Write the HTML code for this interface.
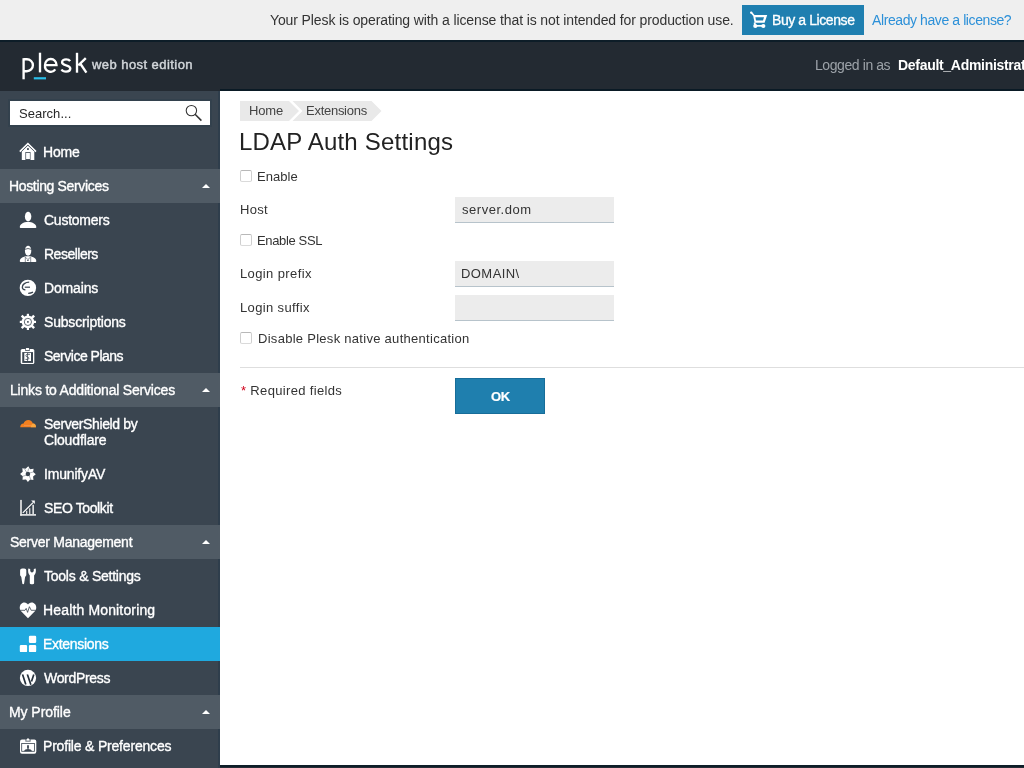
<!DOCTYPE html><html><head><meta charset="utf-8">
<style>
*{margin:0;padding:0;box-sizing:border-box}
html,body{width:1024px;height:768px;overflow:hidden;background:#fff}
body{position:relative;font-family:"Liberation Sans",sans-serif;color:#333}
.a{position:absolute;white-space:nowrap;line-height:normal;will-change:transform}
.it{-webkit-text-stroke:0.35px #fff}
#top{position:absolute;left:0;top:0;width:1024px;height:40px;background:#efefef}
#hdr{position:absolute;left:0;top:40px;width:1024px;height:51px;background:#232a32;border-top:2px solid #0d1d28}
#side{position:absolute;left:0;top:91px;width:220px;height:677px;background:#3a4550;border-right:2px solid #2f3e4c}
#main{position:absolute;left:220px;top:89px;width:804px;height:678px;background:#fff;border-top:2px solid #0a1a25;border-bottom:2px solid #0e1d28}
.sec{position:absolute;left:0;width:220px;height:34px;background:#505b65}
.tri{position:absolute;left:202px;width:0;height:0;border-left:4.2px solid transparent;border-right:4.2px solid transparent;border-bottom:4.8px solid #fff}
.it{color:#fff;font-size:14px}
.ic{position:absolute;left:16px;width:24px;height:24px}
.lb{font-size:13px;color:#333}
.cb{position:absolute;left:240px;width:12px;height:12px;border:1px solid #cfcfcf;border-top-color:#b8b8b8;border-bottom-color:#dadada;border-radius:2px;background:#fff}
.inp{position:absolute;left:455px;width:159px;height:26px;background:#ececec;border-bottom:1px solid #b7c3cb}
</style></head><body>
<div id="top"></div>
<div class="a" style="left: 269.9px; top: 12px; font-size: 14px; color: rgb(51, 51, 51); letter-spacing: -0.115px;">Your Plesk is operating with a license that is not intended for production use.</div>
<div style="position:absolute;left:742px;top:5px;width:122px;height:30px;background:#1f7fb0"></div>
<div class="a" style="left: 772px; top: 12px; font-size: 14px; color: rgb(255, 255, 255); -webkit-text-stroke: 0.3px rgb(255, 255, 255); letter-spacing: -0.416px;">Buy a License</div>
<div class="a" style="left: 871.9px; top: 12px; font-size: 14px; color: rgb(44, 144, 216); letter-spacing: -0.409px;">Already have a license?</div>

<div id="hdr"></div>
<div class="a" style="left: 92.18px; top: 57px; font-size: 13px; -webkit-text-stroke: 0.45px rgb(210, 214, 218); color: rgb(210, 214, 218); letter-spacing: 0.439px;">web host edition</div>
<div class="a" style="left: 814.64px; top: 57px; font-size: 14px; color: rgb(156, 162, 168); letter-spacing: -0.415px;">Logged in as</div>
<div class="a" style="left: 898.3px; top: 57px; font-size: 14px; font-weight: bold; color: rgb(255, 255, 255); letter-spacing: -0.3px;">Default_Administrator</div>

<div id="side"></div>
<div style="position:absolute;left:8px;top:99px;width:204px;height:28px;background:#33414d"></div>
<div style="position:absolute;left:10px;top:101px;width:200px;height:24px;background:#fff"></div>
<div class="a" style="left: 18.82px; top: 106px; font-size: 13px; color: rgb(40, 40, 40); letter-spacing: 0.031px;">Search...</div>


<div class="sec" style="top:169px"></div><div class="tri" style="top:183.5px"></div>
<div class="sec" style="top:373px"></div><div class="tri" style="top:387.5px"></div>
<div class="sec" style="top:525px"></div><div class="tri" style="top:539.5px"></div>
<div class="sec" style="top:695px"></div><div class="tri" style="top:709.5px"></div>
<div style="position:absolute;left:0;top:627px;width:220px;height:34px;background:#1fa9df"></div>
<div class="a it" style="left: 9.1px; top: 178px; letter-spacing: -0.344px;">Hosting Services</div>
<div class="a it" style="left: 9.82px; top: 382px; letter-spacing: -0.196px;">Links to Additional Services</div>
<div class="a it" style="left: 10px; top: 534px; letter-spacing: -0.27px;">Server Management</div>
<div class="a it" style="left: 9.28px; top: 704px; letter-spacing: -0.063px;">My Profile</div>
<div class="a it" style="left: 43.1px; top: 144px; letter-spacing: -0.201px;">Home</div>
<div class="a it" style="left: 43.64px; top: 212px; letter-spacing: -0.244px;">Customers</div>
<div class="a it" style="left: 43.64px; top: 246px; letter-spacing: -0.5px;">Resellers</div>
<div class="a it" style="left: 43.64px; top: 280px; letter-spacing: -0.166px;">Domains</div>
<div class="a it" style="left: 43.64px; top: 314px; letter-spacing: -0.181px;">Subscriptions</div>
<div class="a it" style="left: 43.64px; top: 348px; letter-spacing: -0.5px;">Service Plans</div>
<div class="a it" style="left: 43.64px; top: 416px; letter-spacing: -0.371px;">ServerShield by</div>
<div class="a it" style="left: 43.64px; top: 432px; letter-spacing: -0.132px;">Cloudflare</div>
<div class="a it" style="left: 43.64px; top: 466px; letter-spacing: -0.175px;">ImunifyAV</div>
<div class="a it" style="left: 43.64px; top: 500px; letter-spacing: -0.38px;">SEO Toolkit</div>
<div class="a it" style="left: 43.64px; top: 568px; letter-spacing: -0.239px;">Tools &amp; Settings</div>
<div class="a it" style="left: 42.74px; top: 602px; letter-spacing: 0.15px;">Health Monitoring</div>
<div class="a it" style="left: 43.46px; top: 636px; letter-spacing: -0.291px;">Extensions</div>
<div class="a it" style="left: 43.64px; top: 670px; letter-spacing: -0.325px;">WordPress</div>
<div class="a it" style="left: 43.46px; top: 738px; letter-spacing: -0.19px;">Profile &amp; Preferences</div>
<div id="main"></div><div style="position:absolute;left:220px;top:767px;width:804px;height:1px;background:#262c35"></div>
<svg style="position:absolute;left:0;top:0" width="1024" height="768">
<polygon points="240,101 289,101 299,111 289,121 240,121" fill="#e9e9e9"></polygon>
<polygon points="292.5,101 371.5,101 381.5,111 371.5,121 292.5,121 302.5,111" fill="#e9e9e9"></polygon>
<rect x="240" y="367" width="784" height="1" fill="#dedede"></rect>
</svg>
<div class="a" style="left: 249.28px; top: 103px; font-size: 13px; color: rgb(68, 68, 68); letter-spacing: -0.136px;">Home</div>
<div class="a" style="left: 306.46px; top: 103px; font-size: 13px; color: rgb(68, 68, 68); letter-spacing: -0.27px;">Extensions</div>
<div class="a" style="left: 239.46px; top: 128px; font-size: 24px; color: rgb(34, 34, 34); letter-spacing: 0.215px;">LDAP Auth Settings</div>
<div class="cb" style="top:170px"></div>
<div class="a lb" style="left: 257.46px; top: 169px; letter-spacing: 0.04px;">Enable</div>
<div class="a lb" style="left: 239.64px; top: 202px; letter-spacing: 0.269px;">Host</div>
<div class="inp" style="top:197px"></div>
<div class="a lb" style="left: 461.72px; top: 202px; letter-spacing: 0.53px;">server.dom</div>
<div class="cb" style="top:234px"></div>
<div class="a lb" style="left: 257.46px; top: 233px; letter-spacing: -0.355px;">Enable SSL</div>
<div class="a lb" style="left: 239.64px; top: 266px; letter-spacing: 0.381px;">Login prefix</div>
<div class="inp" style="top:261px"></div>
<div class="a lb" style="left: 460.82px; top: 266px; letter-spacing: 0.432px;">DOMAIN\</div>
<div class="a lb" style="left: 239.64px; top: 300px; letter-spacing: 0.364px;">Login suffix</div>
<div class="inp" style="top:295px"></div>
<div class="cb" style="top:332px"></div>
<div class="a lb" style="left: 258px; top: 331px; letter-spacing: 0.283px;">Disable Plesk native authentication</div>
<div class="a lb" style="left: 240.54px; top: 383px; letter-spacing: 0.333px;"><span style="color:#d0021b">*</span> Required fields</div>
<div style="position:absolute;left:455px;top:378px;width:90px;height:36px;background:#1f7fae;border:1px solid #176d99"></div>
<div class="a" style="left: 490.9px; top: 389px; font-size: 13px; font-weight: bold; color: rgb(255, 255, 255); -webkit-text-stroke: 0.2px rgb(255, 255, 255); letter-spacing: -0.4px;">OK</div>


<svg id="ov" style="position:absolute;left:0;top:0;pointer-events:none" width="1024" height="768" viewBox="0 0 1024 768">
<!-- logo -->
<g fill="none" stroke="#fff" stroke-width="2.35">
<path d="M23.6 79.3V58.2"></path>
<path d="M23.6 59.2H26.9A6 6 0 0 1 26.9 71.2H23.6"></path>
<path d="M40 52.7V72.4"></path>
<path d="M45 65.1H56.5A5.75 6.1 0 0 0 45 65.1A5.75 6.1 0 0 0 55.3 69.4"></path>
<path d="M70.1 61.2C69.3 59.9 67.9 59.3 66.1 59.3C63.7 59.3 62.1 60.5 62.1 62.3C62.1 64.3 64.1 64.9 66.1 65.3C68.3 65.8 70.3 66.5 70.3 68.6C70.3 70.5 68.5 71.6 66 71.6C64 71.6 62.3 70.8 61.5 69.5"></path>
<path d="M77 52.8V72.7"></path>
<path d="M85.8 58.2L78.3 65.3"></path>
<path d="M80.2 63.5L86.4 72.7"></path>
</g>
<rect x="33.8" y="77.2" width="12.2" height="2.2" fill="#2bbfea"></rect>
<!-- cart -->
<g fill="#fff">
<circle cx="751.2" cy="12.6" r="1.2"></circle>
<path d="M751 12.3L753.8 15.4" stroke="#fff" stroke-width="1.6"></path>
<path fill-rule="evenodd" d="M753 15H767.2L764.6 22.8H754.6ZM755.4 17.3H764L763 20.6H756Z"></path>
<path d="M754.6 22.5L755 25" stroke="#fff" stroke-width="1.8"></path>
<circle cx="755.3" cy="26" r="2.1"></circle>
<circle cx="763.3" cy="26" r="2.1"></circle>
<rect x="755" y="25" width="8.3" height="1.7"></rect>
</g>
<!-- search -->
<g fill="none" stroke="#333" stroke-width="1.05">
<circle cx="191.4" cy="110.6" r="5.2"></circle>
<path d="M195.1 114.3L201.4 120.6" stroke-width="1.5"></path>
</g>
<!-- triangles drawn elsewhere -->
<!-- home -->
<g transform="translate(16,140)">
<path d="M5.8 11.4L11.9 5.5L18.3 11.4V20H5.8Z" fill="#fff"></path>
<path d="M3.8 11.6L11.9 3.7L20 11.6" fill="none" stroke="#fff" stroke-width="1.6"></path>
<path d="M5.8 11.1L11.9 5.1L18.2 11.1" fill="none" stroke="#3a4550" stroke-width="0.6"></path>
<rect x="9.4" y="12" width="5.1" height="8" fill="#3a4550"></rect>
<rect x="10.1" y="12.8" width="3.8" height="6.3" fill="#fff"></rect>
<rect x="11.1" y="8.1" width="1.7" height="1.9" fill="#3a4550"></rect>
</g>
<!-- customers -->
<g transform="translate(16,208)" fill="#fff">
<ellipse cx="12.1" cy="8.6" rx="3.2" ry="4.9"></ellipse>
<path d="M3.8 19.2C3.8 16 7.5 14 12 14C16.5 14 20.3 16 20.3 19.2Q20.3 20 19.5 20H4.6Q3.8 20 3.8 19.2Z"></path>
</g>
<!-- resellers -->
<g transform="translate(16,242)">
<ellipse cx="12.1" cy="8.8" rx="3.2" ry="5" fill="#fff"></ellipse>
<path d="M8.8 7.4Q12 5.6 15.3 7.4" fill="none" stroke="#3a4550" stroke-width="0.8"></path>
<path d="M3.8 19.2C3.8 16 7.5 14.3 12 14.3C16.5 14.3 20.3 16 20.3 19.2Q20.3 20 19.5 20H4.6Q3.8 20 3.8 19.2Z" fill="#fff"></path>
<path d="M9.3 15V20M14.7 15V20M9.6 15.3L11.9 17.6L14.3 15.3" fill="none" stroke="#3a4550" stroke-width="0.6"></path>
<circle cx="11.9" cy="18.4" r="0.7" fill="#3a4550"></circle>
</g>
<!-- domains -->
<g transform="translate(16,276)">
<circle cx="11.9" cy="11.9" r="8.2" fill="#fff"></circle>
<path d="M13.2 6.2C9.5 6.2 6.3 8.3 6.3 11.2C6.3 12.8 7.6 13.7 9.4 13.8" fill="none" stroke="#3a4550" stroke-width="1.3"></path>
<path d="M8.8 11.2H14" stroke="#3a4550" stroke-width="1.2"></path>
<path d="M12.2 17.3C13.7 17.3 15.7 16.8 17 16.1" fill="none" stroke="#3a4550" stroke-width="1.2"></path>
</g>
<!-- subscriptions gear -->
<g transform="translate(16,310)">
<g fill="#fff">
<circle cx="11.9" cy="11.9" r="6.3"/>
<rect x="10.8" y="3.8" width="2.2" height="16.2"/>
<rect x="3.8" y="10.8" width="16.2" height="2.2"/>
<rect x="10.7" y="3.1" width="2.4" height="17.6" transform="rotate(45 11.9 11.9)"/>
<rect x="10.7" y="3.1" width="2.4" height="17.6" transform="rotate(-45 11.9 11.9)"/>
</g>
<circle cx="11.9" cy="11.9" r="3.6" fill="none" stroke="#3a4550" stroke-width="0.8"/>
<rect x="11.1" y="11.1" width="1.6" height="1.6" fill="#3a4550"/>
</g>
<!-- service plans -->
<g transform="translate(16,344)">
<rect x="4.7" y="4.9" width="13.6" height="15.1" rx="1.6" fill="#fff"></rect>
<rect x="9.3" y="3.2" width="4.4" height="3.9" rx="0.6" fill="#3a4550"></rect>
<rect x="9.9" y="3.9" width="3.2" height="2.3" rx="0.4" fill="#fff"></rect>
<rect x="6.25" y="8.1" width="10.75" height="10.8" fill="#3a4550"></rect>
<rect x="8.3" y="8.9" width="6.7" height="8.1" fill="#fff"></rect>
<path d="M11.6 8.9V17M14 10.3H11.2C9.6 10.3 9.4 12.8 11.2 12.9C13 13 13.4 15.3 11.6 15.4H9.5" fill="none" stroke="#3a4550" stroke-width="0.8"></path>
</g>
<!-- cloudflare -->
<g transform="translate(16,412)">
<path d="M4.2 15.2C4.2 13.2 5.6 11.5 7.6 11.5C8.2 9.4 10.1 8 12.3 8C14.5 8 16.2 9.5 16.8 11.4C18.6 11.4 20 13.1 20 15.2Z" fill="#f38020"></path>
<path d="M14.8 15.2C14.9 13.2 16 11.4 17.4 11.4C18.9 11.4 20 13.1 20 15.2Z" fill="#f9a73e"></path>
<path d="M8 13.6H15.2" stroke="#f6a071" stroke-width="0.5"></path>
</g>
<!-- imunify -->
<g transform="translate(16,462)">
<polygon fill="#fff" points="12.3,4.3 14,7.2 17.6,6.7 17.1,10 19.8,12.3 17.1,14.4 17.4,17.9 14.1,17.6 11.9,20 10,17.4 6.5,17.8 6.8,14.3 4.1,12 6.7,9.8 6.3,6.3 9.6,6.8"/>
<circle cx="11.9" cy="12" r="2.3" fill="#3a4550"/>
<path d="M10.6 10.1L8.6 7.2M13.8 10.9L17.2 10M13.3 13.9L14.6 17.2M10.1 13.2L6.8 14.3M11.9 9.7L12.6 6.5" fill="none" stroke="#5a6570" stroke-width="0.5"/>
</g>
<!-- seo -->
<g transform="translate(16,496)">
<rect x="4.2" y="3.9" width="1.6" height="15.8" fill="#eee"></rect>
<rect x="4.2" y="18.1" width="15.8" height="1.6" fill="#eee"></rect>
<rect x="10" y="14.8" width="1.3" height="3.3" fill="#ddd"></rect>
<rect x="13" y="12.2" width="1.4" height="5.9" fill="#ccc"></rect>
<rect x="16.4" y="8.8" width="1.5" height="9.3" fill="#eee"></rect>
<path d="M6.8 16.9L17 6.6" stroke="#fff" stroke-width="1.2"></path>
<polygon points="15.1,4.4 18.8,4.4 18.8,8.1" fill="#fff"></polygon>
</g>
<!-- tools -->
<g transform="translate(16,564)" fill="#fff">
<path d="M4.1 6.3Q4.1 4.4 6.2 4.4H8.2Q10.3 4.4 10.3 6.3V11.3L9.1 13L8.1 19.6Q8 20.2 7.2 20.2Q6.4 20.2 6.3 19.6L5.3 13L4.1 11.3Z"></path>
<path d="M12.3 4.6C11.8 7.5 12.2 10 13.8 11.4V19C13.8 20.2 14.8 20.3 16 20.3C17.1 20.3 18.1 20.2 18.1 19V11.4C19.8 10 20.2 7.5 19.7 4.6L17.8 4.9V6.3C17.8 7.6 17 8.4 16 8.4C15 8.4 14.2 7.6 14.2 6.3V4.9Z"></path>
</g>
<!-- health -->
<g transform="translate(16,598)">
<path d="M12 20.3L4.9 13.1C3.3 11.5 3.5 8.1 4.6 6.5C5.6 5 7.2 4.4 8.4 4.4C10.2 4.4 11.2 5.5 12 6.4C12.8 5.5 13.8 4.4 15.6 4.4C16.8 4.4 18.4 5 19.4 6.5C20.5 8.1 20.7 11.5 19.1 13.1Z" fill="#fff"></path>
<path d="M3.5 12.3H9L10.2 10.4L11.6 14.4L13.4 8.7L15.2 12.3H20.5" fill="none" stroke="#3a4550" stroke-width="0.8"></path>
</g>
<!-- extensions -->
<g transform="translate(16,632)" fill="#fff">
<rect x="12.9" y="3.8" width="7.3" height="7.2" rx="1.2"></rect>
<rect x="3.8" y="12.9" width="7.3" height="7.2" rx="1.2"></rect>
<rect x="12.9" y="12.9" width="7.3" height="7.2" rx="1.2"></rect>
</g>
<!-- wordpress -->
<g transform="translate(16,666)">
<circle cx="12" cy="11.9" r="8.1" fill="#fff"/>
<path d="M6.5 8.3L9.8 18.4M11.3 8.2L14.9 18.7M17.8 8.5L15.5 15.4" fill="none" stroke="#26313c" stroke-width="1.7"/>
<path d="M5.4 7.9H9.4M10.2 7.9H13.8" stroke="#fff" stroke-width="0.7"/>
</g>
<!-- profile -->
<g transform="translate(16,734)">
<rect x="4" y="5.6" width="16.3" height="14.2" rx="2" fill="#fff"></rect>
<path d="M9.3 7.6L9.8 5.2L12 3.3L14.2 5.2L14.7 7.6Z" fill="#3a4550"></path>
<path d="M10.2 6.8L10.5 5.4L12 4L13.5 5.4L13.8 6.8Z" fill="#fff"></path>
<rect x="5.7" y="9.5" width="12.7" height="7.8" fill="#fff" stroke="#3a4550" stroke-width="0.8"></rect>
<path d="M11.1 11.2H12.9V14.8H11.1Z" fill="#3a4550"></path>
<path d="M8 17.3C8.5 15.8 10 15 12 15C14 15 15.5 15.8 16 17.3Z" fill="#3a4550"></path>
</g>
</svg>
</body></html>
